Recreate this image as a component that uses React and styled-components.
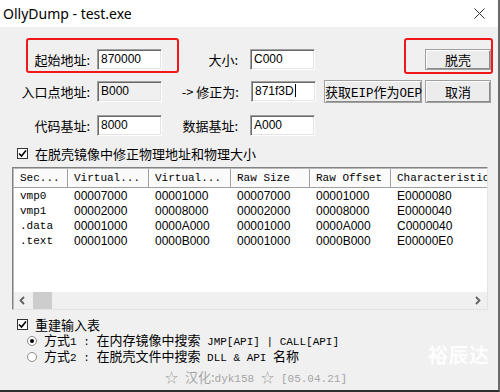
import React from 'react';
import styled, { createGlobalStyle } from 'styled-components';

const GlobalStyle = createGlobalStyle`
  html, body {
    margin: 0;
    padding: 0;
    background: #f0f0f0;
  }
`;

const CJK = '"Noto Sans CJK SC", "Noto Sans", sans-serif';
const MONO = '"Liberation Mono", "Noto Sans CJK SC", monospace';
const SANS = '"Liberation Sans", "Noto Sans CJK SC", sans-serif';

const Window = styled.div`
  position: relative;
  box-sizing: border-box;
  width: 500px;
  height: 392px;
  overflow: hidden;
  background: #f0f0f0;
  border-right: 2px solid #6a6a6a;
  border-bottom: 2px solid #2e2e2e;
  font-family: ${CJK};
  font-size: 13px;
  color: #000;
`;

const TitleBar = styled.div`
  height: 27px;
  background: #fff;
  display: flex;
  align-items: center;
  justify-content: space-between;
  padding: 0 13px 0 3px;
`;

const Title = styled.span`
  font-family: "Noto Sans", sans-serif;
  font-size: 14px;
  color: #000;
`;

const Body = styled.div`
  display: flex;
  flex-direction: column;
`;

const FormRow = styled.div`
  display: flex;
  align-items: center;
  height: ${p => p.$h || 21}px;
  margin-top: ${p => p.$top}px;
`;

const Label = styled.div`
  box-sizing: border-box;
  width: ${p => p.$w}px;
  padding-right: ${p => p.$pr}px;
  text-align: right;
  white-space: nowrap;
  line-height: 21px;
`;

const TextBox = styled.div`
  box-sizing: border-box;
  width: 65px;
  height: 21px;
  background: ${p => (p.$disabled ? '#f0f0f0' : '#fff')};
  border-top: 1px solid #a0a0a0;
  border-left: 1px solid #a0a0a0;
  border-right: 1px solid #fff;
  border-bottom: 1px solid #fff;
  box-shadow: inset 1px 1px 0 #696969, inset -1px -1px 0 #e3e3e3;
  font-family: ${SANS};
  font-size: 12px;
  line-height: 19px;
  padding-left: 3px;
  white-space: nowrap;
`;

const Caret = styled.span`
  display: inline-block;
  width: 1px;
  height: 13px;
  background: #000;
  vertical-align: -2px;
  margin-left: 1px;
`;

const Button = styled.div`
  box-sizing: border-box;
  width: ${p => p.$w}px;
  height: ${p => p.$h || 23}px;
  line-height: ${p => (p.$h || 23) - 2}px;
  margin-left: ${p => p.$ml || 0}px;
  background: #ececec;
  border: 1px solid #a0a0a0;
  box-shadow: inset 1px 1px 0 #fff, inset -1px -1px 0 #8a8a8a;
  text-align: center;
  white-space: nowrap;
  font-size: 13px;
`;

const Mono = styled.span`
  font-family: ${MONO};
  font-size: ${p => p.$size || 11}px;
`;

const CheckRow = styled.div`
  display: flex;
  align-items: center;
  height: ${p => p.$h || 15}px;
  line-height: ${p => p.$h || 15}px;
  margin-top: ${p => p.$top}px;
  padding-left: ${p => p.$pl || 17}px;
  white-space: nowrap;
  gap: ${p => p.$gap || 7}px;
`;

const CheckBox = styled.div`
  box-sizing: border-box;
  width: 11px;
  height: 11px;
  border: 1px solid #333;
  background: #fff;
  display: flex;
  align-items: center;
  justify-content: center;
`;

const Radio = styled.div`
  box-sizing: border-box;
  width: 10px;
  height: 10px;
  border-radius: 50%;
  border: 1px solid #8a8a8a;
  background: #fff;
  display: flex;
  align-items: center;
  justify-content: center;
  &::after {
    content: '';
    width: 4px;
    height: 4px;
    border-radius: 50%;
    background: ${p => (p.$on ? '#000' : 'transparent')};
  }
`;

const TableFrame = styled.div`
  box-sizing: border-box;
  margin: 6px 0 0 12px;
  width: 476px;
  height: 143px;
  background: #fff;
  border-top: 1px solid #828282;
  border-left: 1px solid #828282;
  border-right: 1px solid #e3e3e3;
  border-bottom: 1px solid #e3e3e3;
  box-shadow: inset 1px 1px 0 #b9b9b9;
  display: flex;
  flex-direction: column;
  overflow: hidden;
  padding: 1px 0 0 1px;
`;

const HeaderRow = styled.div`
  display: flex;
  height: 19px;
  flex-shrink: 0;
`;

const HeaderCell = styled.div`
  box-sizing: border-box;
  width: ${p => p.$w}px;
  flex-shrink: 0;
  border-right: 1px solid #a0a0a0;
  border-bottom: 1px solid #a0a0a0;
  box-shadow: inset 1px 1px 0 #fff;
  background: #fbfbfb;
  font-family: ${MONO};
  font-size: 11px;
  line-height: 18px;
  padding-left: 6px;
  white-space: nowrap;
  overflow: hidden;
`;

const Rows = styled.div`
  flex: 1;
  padding-top: 1px;
`;

const DataRow = styled.div`
  display: flex;
  height: 15px;
  line-height: 15px;
`;

const Cell = styled.div`
  width: ${p => p.$w}px;
  flex-shrink: 0;
  padding-left: 6px;
  box-sizing: border-box;
  white-space: nowrap;
  overflow: hidden;
  font-family: ${p => (p.$mono ? MONO : SANS)};
  font-size: ${p => (p.$mono ? 11 : 12)}px;
`;

const ScrollBar = styled.div`
  height: 17px;
  flex-shrink: 0;
  background: #f0f0f0;
  display: flex;
  align-items: center;
  justify-content: space-between;
  padding: 0 6px 0 5px;
`;

const ScrollLeft = styled.div`
  display: flex;
  align-items: center;
  gap: 8px;
`;

const Thumb = styled.div`
  width: 19px;
  height: 17px;
  background: #cdcdcd;
`;

const Footer = styled.div`
  margin-top: 4px;
  height: 16px;
  line-height: 16px;
  padding-left: 165px;
  color: #a5a5a5;
  white-space: nowrap;
  word-spacing: 4px;
`;

const RedBox = styled.div`
  position: absolute;
  box-sizing: border-box;
  left: ${p => p.$x}px;
  top: ${p => p.$y}px;
  width: ${p => p.$w}px;
  height: ${p => p.$h}px;
  border: 2px solid #f01818;
  border-radius: 3px;
  pointer-events: none;
`;

const Watermark = styled.div`
  position: absolute;
  left: 428px;
  top: 340px;
  font-size: 20px;
  font-weight: 700;
  color: rgba(255, 255, 255, 0.9);
  letter-spacing: 0.5px;
`;

const Tick = () => (
  <svg width="9" height="9" viewBox="0 0 9 9">
    <path d="M1 4.5 L3.5 7 L8 1.5" fill="none" stroke="#000" strokeWidth="1.6" />
  </svg>
);

const Arrow = ({ dir }) => (
  <svg width="6" height="9" viewBox="0 0 6 9">
    <path
      d={dir === 'left' ? 'M5 1 L1.5 4.5 L5 8' : 'M1 1 L4.5 4.5 L1 8'}
      fill="none"
      stroke="#606060"
      strokeWidth="1.8"
    />
  </svg>
);

const columns = [
  { title: 'Sec...', w: 54 },
  { title: 'Virtual...', w: 81 },
  { title: 'Virtual...', w: 82 },
  { title: 'Raw Size', w: 79 },
  { title: 'Raw Offset', w: 81 },
  { title: 'Characteristics', w: 110 },
];

const sections = [
  ['vmp0', '00007000', '00001000', '00007000', '00001000', 'E0000080'],
  ['vmp1', '00002000', '00008000', '00002000', '00008000', 'E0000040'],
  ['.data', '00001000', '0000A000', '00001000', '0000A000', 'C0000040'],
  ['.text', '00001000', '0000B000', '00001000', '0000B000', 'E00000E0'],
];

export default function App() {
  return (
    <>
      <GlobalStyle />
      <Window>
        <TitleBar>
          <Title>OllyDump - test.exe</Title>
          <svg width="11" height="11" viewBox="0 0 11 11">
            <path d="M0.5 0.5 L10.5 10.5 M10.5 0.5 L0.5 10.5" stroke="#333" strokeWidth="1" />
          </svg>
        </TitleBar>

        <Body>
          <FormRow $top={22}>
            <Label $w={97} $pr={7}>起始地址:</Label>
            <TextBox>870000</TextBox>
            <Label $w={88} $pr={12}>大小:</Label>
            <TextBox>C000</TextBox>
            <Button $w={66} $h={21} $ml={110}>脱壳</Button>
          </FormRow>

          <FormRow $top={10} $h={23}>
            <Label $w={97} $pr={7}>入口点地址:</Label>
            <TextBox $disabled>B000</TextBox>
            <Label $w={89} $pr={12}>-&gt; 修正为:</Label>
            <TextBox>871f3D<Caret /></TextBox>
            <Button $w={98} $ml={8}>获取<Mono $size={12.5}>EIP</Mono>作为<Mono $size={12.5}>OEP</Mono></Button>
            <Button $w={66} $ml={3}>取消</Button>
          </FormRow>

          <FormRow $top={12}>
            <Label $w={97} $pr={7}>代码基址:</Label>
            <TextBox>8000</TextBox>
            <Label $w={88} $pr={12}>数据基址:</Label>
            <TextBox>A000</TextBox>
          </FormRow>

          <CheckRow $top={10}>
            <CheckBox><Tick /></CheckBox>
            在脱壳镜像中修正物理地址和物理大小
          </CheckRow>

          <TableFrame>
            <HeaderRow>
              {columns.map((c, i) => (
                <HeaderCell key={i} $w={c.w}>{c.title}</HeaderCell>
              ))}
            </HeaderRow>
            <Rows>
              {sections.map(row => (
                <DataRow key={row[0]}>
                  {row.map((v, i) => (
                    <Cell key={i} $w={columns[i].w} $mono={i === 0}>{v}</Cell>
                  ))}
                </DataRow>
              ))}
            </Rows>
            <ScrollBar>
              <ScrollLeft>
                <Arrow dir="left" />
                <Thumb />
              </ScrollLeft>
              <Arrow dir="right" />
            </ScrollBar>
          </TableFrame>

          <CheckRow $top={7} $h={15}>
            <CheckBox><Tick /></CheckBox>
            重建输入表
          </CheckRow>
          <CheckRow $top={1} $h={16} $pl={27} $gap={7}>
            <Radio $on />
            <span>方式<Mono>1 : </Mono>在内存镜像中搜索<Mono> JMP[API] | CALL[API]</Mono></span>
          </CheckRow>
          <CheckRow $top={0} $h={16} $pl={27} $gap={7}>
            <Radio />
            <span>方式<Mono>2 : </Mono>在脱壳文件中搜索<Mono> DLL &amp; API </Mono>名称</span>
          </CheckRow>
          <Footer>☆ 汉化:<Mono>dyk158</Mono> ☆ <Mono>[05.04.21]</Mono></Footer>
        </Body>

        <RedBox $x={26} $y={38} $w={153} $h={35} />
        <RedBox $x={404} $y={38} $w={89} $h={36} />
        <Watermark>裕辰达</Watermark>
      </Window>
    </>
  );
}
